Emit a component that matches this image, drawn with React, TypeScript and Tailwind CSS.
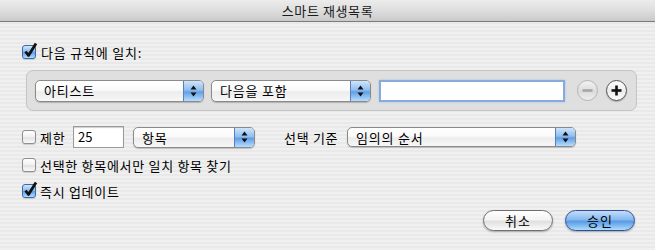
import React from 'react';

const font = "font-['Noto_Sans_CJK_KR','Noto_Sans',sans-serif]";

function Check({ checked }: { checked?: boolean }) {
    return (
        <span className="relative inline-block w-[14px] h-[14px] shrink-0">
            <span
                className={`absolute inset-0 rounded-[3px] border ${
                    checked
                        ? 'border-[#3c68a6] bg-[linear-gradient(180deg,#d2e6fb_0%,#8dbdf0_45%,#5f9fe6_55%,#b4dcff_100%)]'
                        : 'border-[#8e8e8e] bg-[linear-gradient(180deg,#ffffff_0%,#f0f0f0_50%,#e2e2e2_55%,#fbfbfb_100%)]'
                } shadow-[0_1px_1px_rgba(0,0,0,0.15)]`}
            />
            {checked && (
                <svg className="absolute left-[1px] top-[-3px]" width="15" height="16" viewBox="0 0 15 16">
                    <path d="M2.5 9.5 L5.5 13.5 L13 1.5" fill="none" stroke="#111" strokeWidth="2.8" strokeLinejoin="round" />
                </svg>
            )}
        </span>
    );
}

function Arrows() {
    return (
        <svg width="7" height="12" viewBox="0 0 7 12">
            <path d="M3.5 0.5 L6.5 4.5 L0.5 4.5 Z" fill="#111" />
            <path d="M3.5 11.5 L6.5 7.5 L0.5 7.5 Z" fill="#111" />
        </svg>
    );
}

function Popup({ label, width, height = 'h-[22px]' }: { label: string; width: string; height?: string }) {
    return (
        <div
            className={`flex shrink-0 ${width} ${height} rounded-[5px] border border-[#8a8a8a] overflow-hidden shadow-[0_1px_1px_rgba(0,0,0,0.2)] bg-[linear-gradient(180deg,#ffffff_0%,#fafafa_45%,#ececec_55%,#f7f7f7_100%)]`}
        >
            <span className="flex-1 flex items-center pl-[8px] text-[13px] tracking-[0.8px] text-black leading-none">{label}</span>
            <span className="w-[20px] flex items-center justify-center border-l border-[#5a7eb5] bg-[linear-gradient(180deg,#cfe4fb_0%,#8fbef0_45%,#629fe6_55%,#b6ddff_100%)]">
                <Arrows />
            </span>
        </div>
    );
}

function Pill({ label, primary }: { label: string; primary?: boolean }) {
    return (
        <button
            type="button"
            className={`w-[70px] h-[21px] rounded-full border flex items-center justify-center text-[13px] tracking-[1px] text-black leading-none shadow-[0_1px_2px_rgba(0,0,0,0.3)] ${
                primary
                    ? 'border-[#324f96] bg-[linear-gradient(180deg,#c3ddf9_0%,#86b9ef_45%,#5b9ae4_55%,#a9dcff_100%)]'
                    : 'border-[#6f6f6f] bg-[linear-gradient(180deg,#ffffff_0%,#f4f4f4_45%,#e0e0e0_55%,#fafafa_100%)]'
            }`}
        >
            {label}
        </button>
    );
}

function Circle({ sign, disabled }: { sign: 'minus' | 'plus'; disabled?: boolean }) {
    return (
        <span
            className={`w-[21px] h-[21px] rounded-full border flex items-center justify-center ${
                disabled
                    ? 'border-[#b4b4b4] bg-[linear-gradient(180deg,#f2f2f2_0%,#dcdcdc_55%,#eeeeee_100%)]'
                    : 'border-[#555] bg-[linear-gradient(180deg,#ffffff_0%,#ececec_55%,#fbfbfb_100%)] shadow-[0_1px_1px_rgba(0,0,0,0.25)]'
            }`}
        >
            <svg width="11" height="11" viewBox="0 0 11 11">
                <rect x="0.5" y="4.2" width="10" height="2.6" fill={disabled ? '#a6a6a6' : '#111'} />
                {sign === 'plus' && <rect x="4.2" y="0.5" width="2.6" height="10" fill="#111" />}
            </svg>
        </span>
    );
}

export default function App() {
    return (
        <div className={`w-[655px] h-[250px] flex flex-col overflow-hidden ${font} bg-[repeating-linear-gradient(180deg,#f0f0f0_0px,#f0f0f0_2px,#e9e9e9_2px,#e9e9e9_4px)]`}>
            <div className="h-[22px] shrink-0 border-b border-[#7b7b7b] bg-[linear-gradient(180deg,#ececec_0%,#dedede_50%,#cacaca_100%)] flex items-center justify-center">
                <span className="text-[13px] tracking-[0.6px] text-[#1a1a1a] leading-none">스마트 재생목록</span>
            </div>

            <div className="flex flex-col pl-[22px] text-[13px] tracking-[0.7px] text-black">
                <div className="flex items-center gap-[5px] mt-[23px] h-[14px]">
                    <Check checked />
                    <span className="leading-none tracking-[0.8px]">다음 규칙에 일치:</span>
                </div>

                <div className="mt-[11px] ml-[4px] w-[611px] h-[41px] rounded-[7px] border border-[#c4c4c4] bg-[#dfdfdf] flex items-center pl-[8px] gap-[7px]">
                    <Popup label="아티스트" width="w-[169px]" />
                    <Popup label="다음을 포함" width="w-[160px]" />
                    <div className="ml-[1px] w-[186px] h-[22px] bg-white border-2 border-[#86abdc] shadow-[0_0_2px_#9dc0ec]" />
                    <div className="ml-[5px] flex gap-[8px]">
                        <Circle sign="minus" disabled />
                        <Circle sign="plus" />
                    </div>
                </div>

                <div className="flex items-center mt-[15px] h-[22px]">
                    <Check />
                    <span className="ml-[4px] w-[33px] shrink-0 leading-none">제한</span>
                    <div className="w-[51px] shrink-0 h-[22px] bg-white border border-[#9a9a9a] shadow-[inset_0_1px_1px_rgba(0,0,0,0.2)] flex items-center pl-[4px] tracking-normal">
                        25
                    </div>
                    <div className="ml-[9px]">
                        <Popup label="항목" width="w-[122px]" height="h-[21px]" />
                    </div>
                    <span className="ml-[29px] w-[63px] shrink-0 leading-none">선택 기준</span>
                    <Popup label="임의의 순서" width="w-[229px]" height="h-[20px]" />
                </div>

                <div className="flex items-center gap-[4px] mt-[10px] h-[14px]">
                    <Check />
                    <span className="leading-none">선택한 항목에서만 일치 항목 찾기</span>
                </div>

                <div className="flex items-center gap-[4px] mt-[12px] h-[14px]">
                    <Check checked />
                    <span className="leading-none">즉시 업데이트</span>
                </div>

                <div className="flex justify-end gap-[12px] mt-[12px] pr-[20px]">
                    <Pill label="취소" />
                    <Pill label="승인" primary />
                </div>
            </div>
        </div>
    );
}
